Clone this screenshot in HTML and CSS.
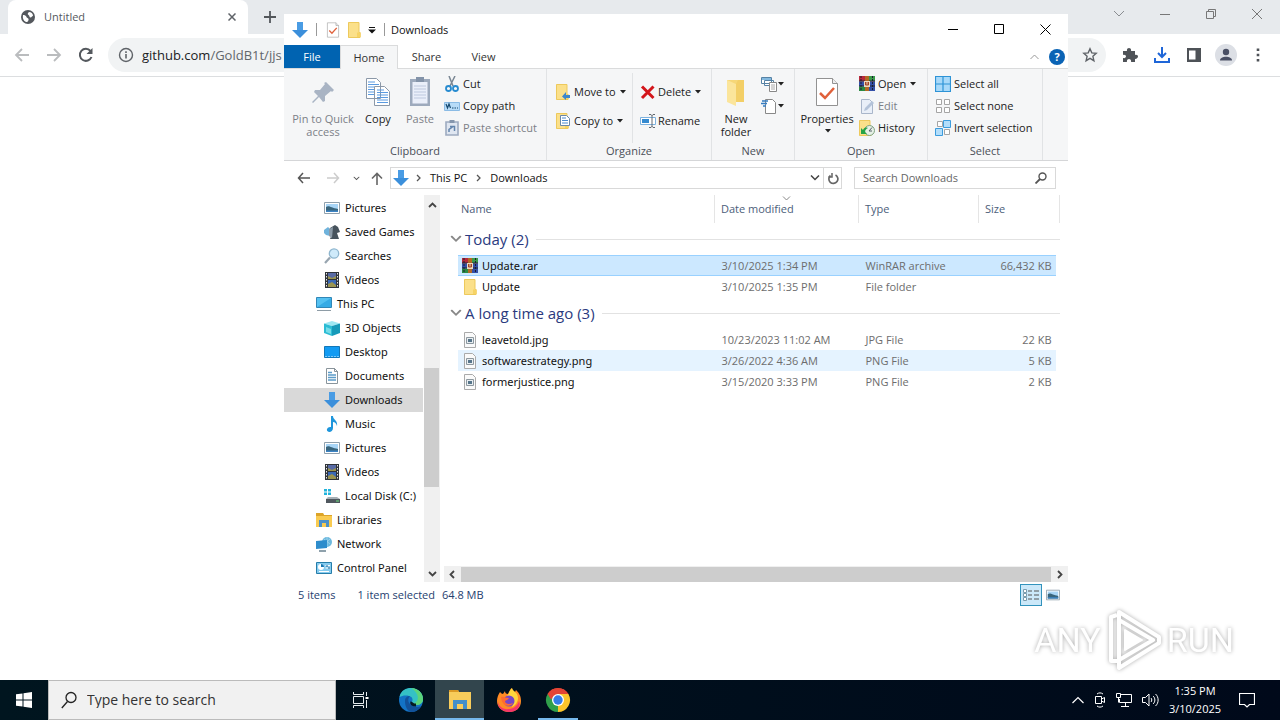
FILE: index.html
```html
<!DOCTYPE html>
<html lang="en">
<head>
<meta charset="utf-8">
<title>Desktop</title>
<link rel="stylesheet" href="styles.css">
</head>
<body>
<svg class="sprite" aria-hidden="true">
  <symbol id="i-down" viewBox="0 0 16 16"><path d="M5 0h6v8h5l-8 8-8-8h5z" fill="#3b8fdb"/><path d="M5 0h6v8h-6z" fill="#4a9ce4"/></symbol>
  <symbol id="i-folder" viewBox="0 0 16 16"><path d="M2 .5h11v10h1.500v5H2z" fill="#fbe08a"/><path d="M2.500 .5h10.500v10h1v5H2.500z" fill="none" stroke="#edc95c"/><path d="M11 15v-4.500h3.500V15z" fill="#f6d365"/></symbol>
  <symbol id="i-rar" viewBox="0 0 16 16"><path d="M0 0h16v5.500H0z" fill="#b62a3c"/><path d="M0 5.500h16v5H0z" fill="#3450a8"/><path d="M0 10.500h16V15H0z" fill="#2c8a44"/><path d="M9 0h7v5H9z" fill="#3a9a4a"/><path d="M10 10h6v5h-6z" fill="#3450a8"/><path d="M0 5h16M0 10h16" stroke="#25283b"/><path d="M2 0v15M13.500 0v15" stroke="#181c30" stroke-dasharray="2 1"/><path d="M6 0h4v15H6z" fill="#b36a24"/><path d="M5 5h6v6H5z" fill="#e9d9c2"/><path d="M6.500 6v3h3V6M8 6v3" fill="none" stroke="#a54324"/></symbol>
  <symbol id="i-pic" viewBox="0 0 16 16"><path d="M.5 2.500h15v11H.5z" fill="#fff" stroke="#8fa0ad"/><path d="M2 4h12v8H2z" fill="#a8d5f6"/><path d="M2 7c3-2 5 1 12 2v3H2z" fill="#39657c"/><path d="M2 10.500h12V12H2z" fill="#3c84c5"/></symbol>
  <symbol id="i-games" viewBox="0 0 16 16"><path d="M0 6l4-3 2 2v7l-4-1-2-2z" fill="#6fb3dc"/><path d="M6 4l5-3 3 2 2 5-3 1 2 6H6l2-5-3-1z" fill="#47535d"/><path d="M5 5l4-2-1 11-3-2z" fill="#8c9ba8"/></symbol>
  <symbol id="i-search" viewBox="0 0 16 16"><path d="M6 9.500L1 15" stroke="#98a5b0" stroke-width="2.200"/><circle cx="10" cy="5.500" r="4.700" fill="#cfeafa" stroke="#8fb6cf" stroke-width="1.300"/></symbol>
  <symbol id="i-video" viewBox="0 0 16 16"><path d="M1 0h14v16H1z" fill="#30343a"/><path d="M4 1h8v6H4z" fill="#596ba5"/><path d="M4 8h8v7H4z" fill="#3a68b5"/><path d="M4 4l4 2 4-2v3H4zM4 12l4-2 4 3v2H4z" fill="#9a9450"/><path d="M2.500 1v15M13.500 1v15" stroke="#e8e8e8" stroke-dasharray="1.500 1.500"/></symbol>
  <symbol id="i-pc" viewBox="0 0 16 16"><path d="M.5 1.500h15v10H.5z" fill="#55c1f1" stroke="#3187b7"/><path d="M1 11L15 2v9z" fill="#37abe5"/><path d="M1 14.500h14" stroke="#8e9ca6"/></symbol>
  <symbol id="i-3d" viewBox="0 0 16 16"><path d="M0 3.500L8 1l8 2.500L8 6z" fill="#9ee8f3"/><path d="M0 3.500L8 6v10l-8-3z" fill="#2cbcd4"/><path d="M16 3.500L8 6v10l8-3z" fill="#169ab9"/><path d="M2 7l5 2v5l-5-2z" fill="#75dce8"/></symbol>
  <symbol id="i-desk" viewBox="0 0 16 16"><path d="M.5 2.500h15v11H.5z" fill="#129bf3" stroke="#1277b8"/><path d="M1 12.500h14" stroke="#7cc9fa" stroke-dasharray="2 1"/></symbol>
  <symbol id="i-doc" viewBox="0 0 16 16"><path d="M2.500 .5h8l3 3v12h-11z" fill="#fff" stroke="#89949b"/><path d="M4 4.500h4M4 7h8M4 9.500h8M4 12h8" stroke="#5b9bc8" stroke-width="1.300"/><path d="M10.500 0v3.500H14" fill="none" stroke="#89949b"/></symbol>
  <symbol id="i-music" viewBox="0 0 16 16"><path d="M7 0h2c0 4 5 4 4 10-1-3-2-4-4-4v6c0 5-7 5-6 1 1-2 3-2 4-2z" fill="#1e96dc"/></symbol>
  <symbol id="i-disk" viewBox="0 0 16 16"><path d="M0 1h3v2.500H0zM4 1h3v2.500H4zM0 4.500h3V7H0zM4 4.500h3V7H4z" fill="#21b4dc"/><path d="M4 9h9l3 2v1H2v-1z" fill="#a7b0b6"/><path d="M2 11h14v4H2z" fill="#50585e"/><path d="M12 13h3" stroke="#6be07e"/></symbol>
  <symbol id="i-lib" viewBox="0 0 16 16"><path d="M0 1h7l1 2h8v12H0z" fill="#f9cb51"/><path d="M0 1h7l1 2h8v1H0z" fill="#dca429"/><path d="M3 8h10v7h-3v-4H6v4H3z" fill="#4c91c9"/></symbol>
  <symbol id="i-net" viewBox="0 0 16 16"><circle cx="11" cy="6" r="5" fill="#6db9de"/><path d="M8 3l6 5M14 3L8 8M11 1v9" stroke="#b9e2f5" stroke-width=".6"/><path d="M0 5l11-1v8L0 13z" fill="#2e8dcc"/><path d="M3 15h7" stroke="#6a8290" stroke-width="1.500"/></symbol>
  <symbol id="i-cpl" viewBox="0 0 16 16"><path d="M.5 2.500h15v11H.5z" fill="#85cbef" stroke="#267da9"/><circle cx="5" cy="7" r="3" fill="#fff"/><path d="M5 7V4a3 3 0 0 1 3 3z" fill="#1978b3"/><path d="M9.500 5.500H14M9.500 8H14M3 11.500h10" stroke="#fff"/><path d="M11 5v2M13 7v2" stroke="#205f8d"/></symbol>
  <symbol id="i-file" viewBox="0 0 16 16"><path d="M2.500 .5h8l3 3v12h-11z" fill="#fafafa" stroke="#aaa"/><path d="M4.500 5.500h7v6h-7z" fill="#e9eef1" stroke="#8d989f"/><path d="M6 7h4v3H6z" fill="#57758a"/></symbol>
  <symbol id="i-drop" viewBox="0 0 6 4"><path d="M0 0h6L3 3.500z" fill="#222"/></symbol>
  <symbol id="i-check" viewBox="0 0 24 30"><path d="M1.500 1.500h16l5 5v22h-21z" fill="#fff" stroke="#929292"/><path d="M17.500 1.500v5h5" fill="#eee" stroke="#929292"/><path d="M5 16l5 5 9-10" fill="none" stroke="#e0613b" stroke-width="2.500"/></symbol>
  <symbol id="i-cd" viewBox="0 0 10 6"><path d="M1 .5l4 4 4-4" fill="none" stroke="currentColor" stroke-width="1.500"/></symbol>
</svg>

<main class="desktop">
  <section class="browser" aria-label="Browser">
    <div class="tabstrip">
      <div class="tab">
        <svg width="14" height="14" viewBox="0 0 14 14"><circle cx="7" cy="7" r="7" fill="#54585d"/><path d="M2 5c1.500 0 3 .5 3.500 2s2.500 1 2 3-1.500 2-2.500 2C2 10.500 1.500 8 2 5zM8 2c2 0 4 1.500 4 4-1.500 0-1 1.500-2.500 1.500S9 6 7.500 5 7 3 8 2z" fill="#fff"/></svg>
        <span class="tab-title">Untitled</span>
        <button class="bare" aria-label="Close tab"><svg width="8" height="8" viewBox="0 0 8 8"><path d="M.5.5l7 7m0-7l-7 7" stroke="#5f6368" stroke-width="1.500"/></svg></button>
      </div>
      <button class="bare newtab" aria-label="New tab"><svg width="12" height="12" viewBox="0 0 12 12"><path d="M6 0v12M0 6h12" stroke="#53575b" stroke-width="1.800"/></svg></button>
      <div class="browser-ctl">
        <button class="bare" aria-label="Search tabs"><svg width="12" height="12" viewBox="0 0 12 12"><path d="M1 3l5 5 5-5" fill="none" stroke="#8a8d91"/></svg></button>
        <button class="bare" aria-label="Minimize"><svg width="12" height="12" viewBox="0 0 12 12"><path d="M1 6.500h10" stroke="#777"/></svg></button>
        <button class="bare" aria-label="Restore"><svg width="12" height="12" viewBox="0 0 12 12"><path d="M1.500 3.500h7v7h-7zM3.500 3.500v-2h7v7h-2" fill="none" stroke="#777"/></svg></button>
        <button class="bare" aria-label="Close"><svg width="12" height="12" viewBox="0 0 12 12"><path d="M1 1l10 10M11 1L1 11" stroke="#777"/></svg></button>
      </div>
    </div>
    <div class="toolbar">
      <button class="bare" aria-label="Back"><svg width="16" height="16" viewBox="0 0 16 16"><path d="M15 8H2M8 2L2 8l6 6" fill="none" stroke="#babcbe" stroke-width="1.800"/></svg></button>
      <button class="bare" aria-label="Forward"><svg width="16" height="16" viewBox="0 0 16 16"><path d="M1 8h13M8 2l6 6-6 6" fill="none" stroke="#babcbe" stroke-width="1.800"/></svg></button>
      <button class="bare" aria-label="Reload"><svg width="16" height="16" viewBox="0 0 16 16"><path d="M13.500 10A6 6 0 1 1 12.500 4" fill="none" stroke="#54585d" stroke-width="2"/><path d="M14.500 1v6h-6z" fill="#54585d"/></svg></button>
      <div class="omnibox">
        <svg width="16" height="16" viewBox="0 0 16 16"><circle cx="8" cy="8" r="6.500" fill="none" stroke="#5f6368" stroke-width="1.400"/><path d="M8 7v4.500M8 4.300v1.600" stroke="#5f6368" stroke-width="1.600"/></svg>
        <span class="url">github.com<span class="path">/GoldB1t/jjs</span></span>
        <button class="bare star" aria-label="Bookmark"><svg width="16" height="16" viewBox="0 0 16 16"><path d="M8 1.800l1.800 4.100 4.400.4-3.300 3 1 4.400L8 11.400l-3.900 2.300 1-4.400-3.300-3 4.400-.4z" fill="none" stroke="#5f6368" stroke-width="1.400"/></svg></button>
      </div>
      <div class="tools">
        <button class="bare" aria-label="Extensions"><svg width="16" height="16" viewBox="0 0 16 16"><path d="M1 4h4c-1-4 5-4 4 0h4v4c4-1 4 4 0 4v3H9c1-4-5-4-4 0H1v-4c4 1 4-4 0-3z" fill="#4e5257"/></svg></button>
        <button class="bare" aria-label="Downloads"><svg width="16" height="16" viewBox="0 0 16 16"><path d="M8 0v10M4 6l4 4 4-4M1 11v4h14v-4" fill="none" stroke="#1f66d8" stroke-width="2"/></svg></button>
        <button class="bare" aria-label="Side panel"><svg width="16" height="16" viewBox="0 0 16 16"><path d="M1 1h14v14H1z" fill="#4e5257"/><path d="M3 3.500h6.500v9H3z" fill="#fff"/></svg></button>
        <button class="bare avatar" aria-label="Profile"><svg width="22" height="22" viewBox="0 0 22 22"><circle cx="11" cy="11" r="11" fill="#dcdfe5"/><circle cx="11" cy="8" r="3.200" fill="#4a5065"/><path d="M5 16.500c0-5 12-5 12 0z" fill="#4a5065"/></svg></button>
        <button class="bare" aria-label="Menu"><svg width="16" height="16" viewBox="0 0 16 16"><path d="M6.700 1.500h2.600v2.600H6.700zM6.700 6.700h2.600v2.600H6.700zM6.700 12h2.600v2.600H6.700z" fill="#4e5257"/></svg></button>
      </div>
    </div>
  </section>

  <section class="explorer" aria-label="Downloads">
    <header class="titlebar">
      <svg width="16" height="16"><use href="#i-down"/></svg>
      <i class="tick"></i>
      <button class="bare" aria-label="Properties"><svg width="14" height="16"><use href="#i-check"/></svg></button>
      <button class="bare" aria-label="New folder"><svg width="16" height="16"><use href="#i-folder"/></svg></button>
      <button class="bare" aria-label="Customize"><svg width="8" height="8" viewBox="0 0 8 8"><path d="M1 1.500h6" stroke="#111"/><path d="M0 3.500h8L4 7.500z" fill="#111"/></svg></button>
      <i class="tick"></i>
      <span class="win-title">Downloads</span>
      <div class="win-ctl">
        <button class="bare" aria-label="Minimize"><svg width="11" height="11" viewBox="0 0 11 11"><path d="M0 5.500h10" stroke="#000"/></svg></button>
        <button class="bare" aria-label="Maximize"><svg width="11" height="11" viewBox="0 0 11 11"><path d="M.5.500h9v9h-9z" fill="none" stroke="#000"/></svg></button>
        <button class="bare" aria-label="Close"><svg width="11" height="11" viewBox="0 0 11 11"><path d="M.5.500l10 10m0-10l-10 10" stroke="#000"/></svg></button>
      </div>
    </header>
    <nav class="tabs">
      <button class="file">File</button><button class="current">Home</button><button>Share</button><button>View</button>
      <div class="help">
        <button class="bare" aria-label="Collapse ribbon"><svg width="9" height="6" viewBox="0 0 9 6"><path d="M.5 5l4-4 4 4" fill="none" stroke="#999"/></svg></button>
        <button class="bare" aria-label="Help"><span class="qmark">?</span></button>
      </div>
    </nav>
    <div class="ribbon">
      <section class="group g-clip">
        <div class="body">
          <button class="big pin off"><svg width="32" height="32" viewBox="0 0 32 32"><path d="M19 6l8 8-2 2-1-1-6 5v5l-2 1-4-5-6 6-1-1 6-6-4-4 1-2h5l5-6-1-1z" fill="#a9b4c4"/></svg>Pin to Quick access</button>
          <button class="big copy"><svg width="26" height="32" viewBox="0 0 26 32"><path d="M1.500 2.500h10l4 4v16h-14zM9.500 10.500h10l5 5v14h-15z" fill="#fff" stroke="#8b98a8"/><path d="M3 6h7M3 8.500h11M3 11h6M3 13.500h6M3 16h6M3 18.500h6M12 14h7M12 16.500h11M12 19h11M12 21.500h11M12 24h11M12 26.500h11" stroke="#5a9ae0"/></svg>Copy</button>
          <button class="big paste off"><svg width="22" height="32" viewBox="0 0 22 32"><path d="M1 3h20v27H1z" fill="#9daabd"/><path d="M3.500 6h15v21.500h-15z" fill="#eaeffa"/><path d="M7 1h8v5H7z" fill="#8393a9"/><path d="M5 10h12M5 13h12M5 16h12M5 19h12M5 22h12" stroke="#bdc8de"/></svg>Paste</button>
          <div class="stack">
            <button><svg width="16" height="16" viewBox="0 0 16 16"><path d="M5 0l4 10M11 0L6 10" stroke="#7a8794" stroke-width="1.500"/><circle cx="4.500" cy="12.500" r="2.500" fill="none" stroke="#278bd0" stroke-width="1.800"/><circle cx="11.500" cy="12.500" r="2.500" fill="none" stroke="#278bd0" stroke-width="1.800"/></svg>Cut</button>
            <button><svg width="16" height="16" viewBox="0 0 16 16"><path d="M.5 4.500h15v8H.5z" fill="#b8dcf8" stroke="#8abbe5"/><path d="M2 6l1.500 4L5 6l1.500 4M8 10h1.500M10.500 10H12M13 10h1" fill="none" stroke="#154970" stroke-width="1.200"/></svg>Copy path</button>
            <button class="off"><svg width="16" height="16" viewBox="0 0 16 16"><path d="M2 2h12v13H2z" fill="#dfe6f1" stroke="#9dabc0" stroke-width="1.600"/><path d="M5.500 0h5v3h-5z" fill="#8596ad"/><path d="M5 12V9.500L8.500 7M6 6.500h4.500V11" fill="none" stroke="#6284ac" stroke-width="1.500"/></svg>Paste shortcut</button>
          </div>
        </div>
        <h2>Clipboard</h2>
      </section>
      <section class="group g-org">
        <div class="body">
          <div class="stack two">
            <button><svg width="16" height="16" viewBox="0 0 16 16"><use href="#i-folder" x="-2"/><path d="M14 14v-3h-4V8l-4 4.500 4 3.500v-2z" fill="#3d87cc"/></svg>Move to<svg class="dd"><use href="#i-drop"/></svg></button>
            <button><svg width="16" height="16" viewBox="0 0 16 16"><use href="#i-folder" x="-2"/><path d="M4.500 2.500h6l3 3v7h-9z" fill="#fff" stroke="#6b88a8"/><path d="M6 5h4M6 7.500h6M6 10h6" stroke="#4b8bce"/></svg>Copy to<svg class="dd"><use href="#i-drop"/></svg></button>
          </div>
          <div class="stack two ruled">
            <button><svg width="16" height="16" viewBox="0 0 16 16"><path d="M2 2.500l11.500 11.500M13.500 2.500L2 14" stroke="#d3161b" stroke-width="3"/></svg>Delete<svg class="dd"><use href="#i-drop"/></svg></button>
            <button><svg width="16" height="16" viewBox="0 0 16 16"><path d="M.5 4.500h15v7H.5z" fill="#fff" stroke="#7db2df"/><path d="M2 6h7v4H2z" fill="#348ad0"/><path d="M9 1.500h2l1 1 1-1h2M9 14.500h2l1-1 1 1h2M12 2v12" fill="none" stroke="#626970"/></svg>Rename</button>
          </div>
        </div>
        <h2>Organize</h2>
      </section>
      <section class="group g-new">
        <div class="body">
          <button class="big newf"><svg width="24" height="32" viewBox="0 0 24 32"><path d="M3 4h17v22H3z" fill="#f6d777"/><path d="M3 4l9 4v22l-9-4z" fill="#fbe59b"/><path d="M12 8l2-4h6v22h-8z" fill="#f3cf67"/></svg>New folder</button>
          <div class="stack icons">
            <button aria-label="New item"><svg width="16" height="16" viewBox="0 0 16 16"><path d="M.5 1.500h10v6H.5zM3.500 4.500h9v5h-9z" fill="#fff" stroke="#5682a5"/><path d="M1 2h9v2H1z" fill="#83b9df"/><path d="M8.500 6.500h7v9h-7z" fill="#fff" stroke="#888"/><path d="M10 9h4M10 11h4M10 13h4" stroke="#aaa"/></svg><svg class="dd"><use href="#i-drop"/></svg></button>
            <button aria-label="Easy access"><svg width="16" height="16" viewBox="0 0 16 16"><path d="M4.500 1.500h7l3 3v11h-10z" fill="#fff" stroke="#888"/><path d="M1 3h6M0 5.500h6M2 8h3" stroke="#347cc1" stroke-width="1.400"/></svg><svg class="dd"><use href="#i-drop"/></svg></button>
          </div>
        </div>
        <h2>New</h2>
      </section>
      <section class="group g-open">
        <div class="body">
          <button class="big props"><svg width="24" height="32" viewBox="0 0 24 30"><use href="#i-check"/></svg>Properties<svg class="dd"><use href="#i-drop"/></svg></button>
          <div class="stack">
            <button><svg width="16" height="16"><use href="#i-rar"/></svg>Open<svg class="dd"><use href="#i-drop"/></svg></button>
            <button class="off"><svg width="16" height="16" viewBox="0 0 16 16"><path d="M2.500 1.500h8l3 3v11h-11z" fill="#e9eff8" stroke="#a9b6ca"/><path d="M5 13l1-3 7-7 2 2-7 7z" fill="#b4c3d9"/></svg>Edit</button>
            <button><svg width="16" height="16" viewBox="0 0 16 16"><use href="#i-folder" x="-2"/><circle cx="10.500" cy="10.500" r="5" fill="#e6f0e6" stroke="#7fa380"/><path d="M10 11l3-3.500M10 11h3" fill="none" stroke="#55606a"/><path d="M2 8v6h6l-2-2c0-2 1-3 3-4-3-1-4 0-5 2z" fill="#27a447"/></svg>History</button>
          </div>
        </div>
        <h2>Open</h2>
      </section>
      <section class="group g-sel">
        <div class="body">
          <div class="stack">
            <button><svg width="16" height="16" viewBox="0 0 16 16"><path d="M.5.500h15v15H.5zM8 0v16M0 8h16" fill="#a8d9f9" stroke="#2d93d6" stroke-width="1.200"/></svg>Select all</button>
            <button><svg width="16" height="16" viewBox="0 0 16 16"><path d="M1.500 1.500h5v5h-5zM9.500 1.500h5v5h-5zM1.500 9.500h5v5h-5zM9.500 9.500h5v5h-5z" fill="#fff" stroke="#a5a5a5"/></svg>Select none</button>
            <button><svg width="16" height="16" viewBox="0 0 16 16"><path d="M2.500 1.500h5v5h-5zM9.500 9.500h5v5h-5z" fill="#fff" stroke="#a5a5a5"/><path d="M8.500.5h7v7h-7zM.5 8.500h7v7h-7z" fill="#b3defb" stroke="#3c9cdd"/></svg>Invert selection</button>
          </div>
        </div>
        <h2>Select</h2>
      </section>
    </div>

    <div class="addressrow">
      <button class="bare" aria-label="Back"><svg width="13" height="12" viewBox="0 0 13 12"><path d="M13 6H2M6 1L1.500 6 6 11" fill="none" stroke="#555" stroke-width="1.500"/></svg></button>
      <button class="bare" aria-label="Forward"><svg width="13" height="12" viewBox="0 0 13 12"><path d="M0 6h11M7 1l4.500 5L7 11" fill="none" stroke="#ccc" stroke-width="1.500"/></svg></button>
      <button class="bare recent" aria-label="Recent"><svg width="7" height="5" viewBox="0 0 10 6"><use href="#i-cd"/></svg></button>
      <button class="bare up" aria-label="Up"><svg width="12" height="13" viewBox="0 0 12 13"><path d="M6 13V2M1 6.500L6 1.500l5 5" fill="none" stroke="#666" stroke-width="1.600"/></svg></button>
      <div class="crumbs">
        <svg width="16" height="16"><use href="#i-down"/></svg>
        <svg width="5" height="8" viewBox="0 0 5 8"><path d="M1 1l3 3-3 3" fill="none" stroke="#555" stroke-width="1.300"/></svg>
        <a href="#pc">This PC</a>
        <svg width="5" height="8" viewBox="0 0 5 8"><path d="M1 1l3 3-3 3" fill="none" stroke="#555" stroke-width="1.300"/></svg>
        <a href="#downloads">Downloads</a>
        <button class="bare prev" aria-label="Previous locations"><svg width="10" height="6"><use href="#i-cd"/></svg></button>
        <button class="bare refresh" aria-label="Refresh"><svg width="12" height="13" viewBox="0 0 12 13"><path d="M3.500 3.500A4.500 4.500 0 1 0 8.500 3" fill="none" stroke="#666" stroke-width="1.700"/><path d="M5 1v4H1.500" fill="none" stroke="#666" stroke-width="1.500"/></svg></button>
      </div>
      <label class="searchbox"><input type="search" placeholder="Search Downloads" aria-label="Search Downloads"><svg width="12" height="12" viewBox="0 0 12 12"><circle cx="7.500" cy="4.500" r="3.500" fill="none" stroke="#555" stroke-width="1.400"/><path d="M5 7l-4.500 4.500" stroke="#555" stroke-width="1.800"/></svg></label>
    </div>

    <div class="panes">
      <ul class="tree">
        <li><svg><use href="#i-pic"/></svg>Pictures</li>
        <li><svg><use href="#i-games"/></svg>Saved Games</li>
        <li><svg><use href="#i-search"/></svg>Searches</li>
        <li><svg><use href="#i-video"/></svg>Videos</li>
        <li class="top"><svg><use href="#i-pc"/></svg>This PC</li>
        <li><svg><use href="#i-3d"/></svg>3D Objects</li>
        <li><svg><use href="#i-desk"/></svg>Desktop</li>
        <li><svg><use href="#i-doc"/></svg>Documents</li>
        <li class="chosen"><svg><use href="#i-down"/></svg>Downloads</li>
        <li><svg><use href="#i-music"/></svg>Music</li>
        <li><svg><use href="#i-pic"/></svg>Pictures</li>
        <li><svg><use href="#i-video"/></svg>Videos</li>
        <li><svg><use href="#i-disk"/></svg>Local Disk (C:)</li>
        <li class="top"><svg><use href="#i-lib"/></svg>Libraries</li>
        <li class="top"><svg><use href="#i-net"/></svg>Network</li>
        <li class="top"><svg><use href="#i-cpl"/></svg>Control Panel</li>
      </ul>
      <div class="vscroll">
        <svg width="9" height="6" viewBox="0 0 9 6"><path d="M1 5l3.500-3.500L8 5" fill="none" stroke="#444" stroke-width="1.800"/></svg>
        <div class="vtrack"><div class="vthumb"></div></div>
        <svg width="9" height="6" viewBox="0 0 9 6"><path d="M1 1l3.500 3.500L8 1" fill="none" stroke="#444" stroke-width="1.800"/></svg>
      </div>
      <div class="files">
        <table>
          <colgroup><col class="c-gut"><col><col class="c-date"><col class="c-type"><col class="c-size"><col class="c-tail"></colgroup>
          <thead><tr><th></th><th>Name</th><th class="sorted">Date modified<svg width="9" height="5" viewBox="0 0 9 5"><path d="M1 .5l3.500 3.500L8 .5" fill="none" stroke="#888"/></svg></th><th>Type</th><th>Size</th><th class="end"></th></tr></thead>
          <tbody>
            <tr class="sect"><th colspan="6"><div><svg width="12" height="8" viewBox="0 0 10 6"><use href="#i-cd"/></svg>Today (2)<i></i></div></th></tr>
            <tr class="selected"><td></td><td><span><svg><use href="#i-rar"/></svg>Update.rar</span></td><td>3/10/2025 1:34 PM</td><td>WinRAR archive</td><td>66,432 KB</td><td></td></tr>
            <tr><td></td><td><span><svg><use href="#i-folder"/></svg>Update</span></td><td>3/10/2025 1:35 PM</td><td>File folder</td><td></td><td></td></tr>
            <tr class="sect"><th colspan="6"><div><svg width="12" height="8" viewBox="0 0 10 6"><use href="#i-cd"/></svg>A long time ago (3)<i></i></div></th></tr>
            <tr><td></td><td><span><svg><use href="#i-file"/></svg>leavetold.jpg</span></td><td>10/23/2023 11:02 AM</td><td>JPG File</td><td>22 KB</td><td></td></tr>
            <tr class="hover"><td></td><td><span><svg><use href="#i-file"/></svg>softwarestrategy.png</span></td><td>3/26/2022 4:36 AM</td><td>PNG File</td><td>5 KB</td><td></td></tr>
            <tr><td></td><td><span><svg><use href="#i-file"/></svg>formerjustice.png</span></td><td>3/15/2020 3:33 PM</td><td>PNG File</td><td>2 KB</td><td></td></tr>
          </tbody>
        </table>
        <div class="hscroll">
          <svg width="6" height="9" viewBox="0 0 6 9"><path d="M5 1L1.500 4.500 5 8" fill="none" stroke="#444" stroke-width="1.800"/></svg>
          <div class="hthumb"></div>
          <svg width="6" height="9" viewBox="0 0 6 9"><path d="M1 1l3.500 3.500L1 8" fill="none" stroke="#444" stroke-width="1.800"/></svg>
        </div>
      </div>
    </div>
    <footer class="status">
      <span>5 items</span><span class="sel">1 item selected</span><span class="size">64.8 MB</span>
      <div class="views">
        <button class="bare on" aria-label="Details"><svg width="16" height="14" viewBox="0 0 16 14"><path d="M.5 1.500h3v3h-3zM.5 5.500h3v3h-3zM.5 9.500h3v3h-3z" fill="#fff" stroke="#7b9caf"/><path d="M5 3h4M11 3h5M5 7h4M11 7h5M5 11h4M11 11h5" stroke="#555"/></svg></button>
        <button class="bare" aria-label="Large icons"><svg width="14" height="14"><use href="#i-pic"/></svg></button>
      </div>
    </footer>
  </section>

  <div class="watermark">
    <span>ANY</span>
    <svg width="58" height="64" viewBox="0 0 58 64"><g fill="none" stroke="#fff" stroke-width="4" stroke-linejoin="round"><path d="M12 7L6 9v44h6M14 52V4l40 25v6L14 60v-8l34-20-34-20"/><path d="M20 22l17 10-17 10z" fill="#fff" stroke-width="2"/></g></svg>
    <span>RUN</span>
  </div>
</main>

<footer class="taskbar">
  <button class="bare start" aria-label="Start"><svg width="16" height="16" viewBox="0 0 16 16"><path d="M0 2.300L6.500 1.400v6.100H0zM7.500 1.200L16 0v7.500H7.500zM0 8.500h6.500v6.100L0 13.700zM7.500 8.500H16V16l-8.500-1.200z" fill="#fff"/></svg></button>
  <label class="tasksearch"><svg width="16" height="18" viewBox="0 0 16 18"><circle cx="10" cy="6.500" r="5" fill="none" stroke="#222" stroke-width="1.300"/><path d="M6.500 10.500L.8 17" stroke="#222" stroke-width="1.300"/></svg><input type="text" placeholder="Type here to search" aria-label="Type here to search"></label>
  <button class="bare app" aria-label="Task view"><svg width="16" height="16" viewBox="0 0 16 16"><path d="M.5 0v2.500h10V0M.5 16v-2.500h10V16M.5 4.500h10v7H.5zM13.500 0v4M13.500 8v8" fill="none" stroke="#e8eef0"/><path d="M12.500 5h3v2h-3z" fill="#fff"/></svg></button>
  <button class="bare app wide" aria-label="Edge"><svg width="26" height="26" viewBox="0 0 26 26"><circle cx="13" cy="13" r="12" fill="#1373c5"/><path d="M1.500 10C3 3 8 1 13 1c7 0 12 5 12 11 0 4-3 6-7 6-3 0-5-1-4-3 1-2 1-5-3-6-4-1-7 0-9.500 1z" fill="#35c1c5"/><path d="M13 1c7 0 12 5 12 11 0 4-3 6-7 6-2 0-4-1-4-2 7 1 9-9-1-15z" fill="#5cd47b"/><path d="M7 14c0-4 3-5 5-5-4 4-1 11 8 11 1 0 3-1 3-1-2 4-6 6-10 6-4-1-6-6-6-11z" fill="#12529a"/><path d="M14 15c-1 2 1 3 4 3" stroke="#051a24" stroke-width="3" fill="none"/></svg></button>
  <button class="bare app wide lit" aria-label="File Explorer"><svg width="24" height="24" viewBox="0 0 24 24"><path d="M1 3h9l1 2h12v17H1z" fill="#f8cc5b"/><path d="M1 3h9l1 2H1z" fill="#dc9a25"/><path d="M5 13h14v9h-4v-5H9v5H5z" fill="#438fc9"/></svg></button>
  <button class="bare app wide" aria-label="Firefox"><svg width="26" height="26" viewBox="0 0 26 26"><path d="M4 5c1 1 2 2 3 2l2-3c0 2 1 3 3 3 1-2 2-5 4-6 0 2 2 3 3 4l1-2c4 4 5 7 5 11 0 7-5 11-12 11S1 20 1 14c0-3 1-6 3-9z" fill="#ff8a24"/><path d="M16 1c0 3 6 4 6 10 0 4-3 8-6 9 3-6 0-10-5-11 2-2 2-5 5-8z" fill="#ffd63c"/><path d="M2 14c0 5 5 9 11 8 5 0 9-4 10-8 3 7-4 11-10 11S1 21 2 14z" fill="#f5356a"/><circle cx="13" cy="14" r="5.500" fill="#7746c7"/><path d="M5 10c3-1 4 1 8 1-1 2-3 2-4 3 0 3 4 4 8 2-2 4-11 5-12-6z" fill="#ff6b30"/></svg></button>
  <button class="bare app wide running" aria-label="Chrome"><svg width="26" height="26" viewBox="0 0 26 26"><path d="M13 13L2.600 7A12 12 0 0 1 23.400 7z" fill="#e34435"/><path d="M13 13L23.400 7A12 12 0 0 1 13 25z" fill="#fbc52c"/><path d="M13 13v12A12 12 0 0 1 2.600 7z" fill="#30a04b"/><path d="M13 7h10.500L18 16z" fill="#fbc52c"/><path d="M2.600 7l5.500 9.500L13 7z" fill="#30a04b"/><path d="M2.600 7C5 3 9 1 13 1s8 2 10.400 6H13l-4 2.500-3 3z" fill="#e34435"/><circle cx="13" cy="13" r="6" fill="#fff"/><circle cx="13" cy="13" r="4.700" fill="#347de8"/></svg></button>
  <div class="tray">
    <button class="bare" aria-label="Hidden icons"><svg width="12" height="8" viewBox="0 0 12 8"><path d="M.5 7L6 1.500 11.500 7" fill="none" stroke="#fff" stroke-width="1.200"/></svg></button>
    <button class="bare" aria-label="Meet now"><svg width="12" height="16" viewBox="0 0 12 16"><path d="M1.500 4.500h6v7h-6zM7.500 7l3-1.500v5l-3-1.500M3 2c2-1.500 4-1.500 6 0M3 14c2 1.500 4 1.500 6 0" fill="none" stroke="#fff"/></svg></button>
    <button class="bare" aria-label="Network"><svg width="16" height="14" viewBox="0 0 16 14"><path d="M5 1.500h10.500v8H3.500V6M.5.500h4v4h-4zM2.500 4.500v5M9.500 9.500v4M5 13.500h8" fill="none" stroke="#fff"/></svg></button>
    <button class="bare" aria-label="Volume"><svg width="17" height="14" viewBox="0 0 17 14"><path d="M.5 4.500h3L7 1v12L3.500 9.500h-3zM9 5c1 1 1 3 0 4M11 3c2.500 2 2.500 6 0 8M13.500 1c3.500 3 3.500 9 0 12" fill="none" stroke="#fff"/></svg></button>
    <time class="clock">1:35 PM<br>3/10/2025</time>
    <button class="bare note" aria-label="Notifications"><svg width="16" height="16" viewBox="0 0 16 16"><path d="M.5 1.500h15v11h-5L8 15l-2.500-2.500h-5z" fill="none" stroke="#fff" stroke-width="1.200"/></svg></button>
  </div>
</footer>
</body>
</html>
```

FILE: styles.css
```css
* { box-sizing: border-box; }
body {
  margin: 0;
  min-height: 100vh;
  display: flex;
  flex-direction: column;
  background: #fff;
  color: #111;
  font: 11px/16px "Open Sans", "Noto Sans", sans-serif;
}
button, input { font: inherit; color: inherit; }
.sprite { position: absolute; width: 0; height: 0; }
svg { flex: none; display: block; }
.bare {
  display: flex;
  align-items: center;
  justify-content: center;
  padding: 0;
  border: 0;
  background: none;
}
.desktop { position: relative; flex: 1; }

/* Browser */
.tabstrip { display: flex; height: 34px; background: #e7eaed; padding-left: 8px; }
.tab {
  display: flex;
  align-items: center;
  gap: 9px;
  width: 240px;
  padding: 0 12px 0 13px;
  background: #fff;
  border-radius: 8px 8px 0 0;
}
.tab-title { flex: 1; color: #55595e; }
.newtab { width: 44px; }
.browser-ctl { display: flex; margin-left: auto; padding-bottom: 6px; }
.browser-ctl .bare { width: 46px; }
.toolbar {
  display: flex;
  align-items: center;
  gap: 16px;
  height: 43px;
  padding: 0 14px;
  border-bottom: 1px solid #dcdee0;
}
.omnibox {
  display: flex;
  flex: 1;
  align-items: center;
  gap: 8px;
  height: 34px;
  margin-left: -2px;
  padding: 0 8px 0 10px;
  border-radius: 17px;
  background: #f1f3f4;
}
.url { font-size: 13px; line-height: 20px; color: #202124; }
.path { color: #62666b; }
.star { margin-left: auto; }
.tools { display: flex; gap: 16px; align-items: center; }
.avatar { margin: 0 -3px; }

/* Explorer window */
.explorer {
  position: absolute;
  top: 14px;
  left: 284px;
  right: 212px;
  background: #fff;
}
.titlebar { display: flex; align-items: center; height: 31px; padding-left: 8px; gap: 6px; }
.tick { width: 1px; height: 13px; background: #999; margin: 0 3px 0 2px; }
.win-title { margin-left: -3px; }
.win-ctl { display: flex; align-self: stretch; margin-left: auto; }
.win-ctl .bare { width: 46px; }
.tabs { display: flex; height: 24px; border-bottom: 1px solid #dadbdc; }
.tabs > button { width: 57px; padding: 0; border: 0; background: none; color: #333; }
.tabs > .file { width: 56px; background: #0063b1; color: #fff; }
.tabs > .current { width: 58px; height: 24px; background: #f5f6f7; border: 1px solid #dadbdc; border-bottom: 0; }
.help { display: flex; gap: 10px; align-items: center; margin-left: auto; padding-right: 3px; }
.qmark { width: 16px; height: 16px; border-radius: 8px; background: #0a63b5; color: #fff; font-weight: 700; }

.ribbon { display: flex; height: 92px; background: #f5f6f7; border-bottom: 1px solid #d5d6d8; }
.group {
  display: flex;
  flex-direction: column;
  padding: 4px 0 1px;
  border-right: 1px solid #e1e3e5;
}
.group h2 { margin: 0; font-size: 11px; font-weight: 400; line-height: 16px; text-align: center; color: #4a4f57; }
.body { display: flex; flex: 1; }
.group button { border: 0; padding: 0; background: none; color: #222; text-align: left; }
.group .off { color: #7c8087; }
.group .big {
  display: flex;
  flex-direction: column;
  align-items: center;
  justify-content: flex-start;
  padding-top: 3px;
  gap: 4px;
  text-align: center;
  line-height: 13px;
}
.g-clip { width: 263px; }
.g-org { width: 165px; }
.g-new { width: 83px; }
.g-open { width: 133px; }
.g-sel { width: 115px; }
.group .pin { width: 68px; margin-left: 5px; }
.group .copy { width: 42px; }
.group .paste { width: 42px; margin-right: 3px; }
.group .newf { width: 40px; margin-left: 4px; }
.group .props { width: 64px; }
.stack { display: flex; flex-direction: column; }
.stack button { display: flex; align-items: center; gap: 3px; height: 22px; white-space: nowrap; }
.dd { width: 6px; height: 4px; margin-left: 1px; }
.two { flex: none; width: 85px; padding: 4px 0 0 9px; }
.two button { height: 29px; gap: 2px; }
.two .dd { margin-left: 2px; }
.ruled { flex: 1; width: auto; padding-left: 7px; border-left: 1px solid #e1e3e5; }
.icons { padding-left: 5px; }
.icons button { gap: 0; }
.g-sel .stack { padding-left: 7px; }

.addressrow { display: flex; align-items: center; height: 34px; padding: 0 12px 0 13px; }
.addressrow > .bare { margin-right: 17px; }
.addressrow > .recent { margin: 0 11px 0 -4px; color: #555; }
.addressrow > .up { margin-right: 7px; }
.crumbs {
  display: flex;
  flex: 1;
  align-items: center;
  gap: 9px;
  height: 22px;
  padding-left: 2px;
  border: 1px solid #d9d9d9;
  color: #444;
}
.crumbs svg + svg { margin-left: -2px; }
.crumbs a { color: #111; text-decoration: none; }
.prev { margin-left: auto; margin-right: -6px; }
.refresh { width: 18px; height: 20px; border-left: 1px solid #d9d9d9; }
.searchbox {
  display: flex;
  align-items: center;
  width: 202px;
  height: 22px;
  margin-left: 12px;
  padding: 0 8px;
  border: 1px solid #d9d9d9;
}
.searchbox input { flex: 1; min-width: 0; padding: 0; border: 0; background: none; outline: 0; }
.searchbox input::placeholder { color: #666; }

.panes { display: flex; }
.tree { list-style: none; width: 139px; margin: 0; padding: 1px 0 2px; font-family: "Noto Sans", "Open Sans", sans-serif; }
.tree li {
  display: flex;
  align-items: center;
  gap: 5px;
  height: 24px;
  padding-left: 40px;
  white-space: nowrap;
}
.tree svg { width: 16px; height: 16px; }
.tree .top { padding-left: 32px; }
.tree .chosen { background: #d9d9d9; }
.vscroll {
  display: flex;
  flex-direction: column;
  align-items: center;
  width: 16px;
  margin-left: 1px;
  padding: 7px 0 5px;
  background: #f0f0f0;
}
.vtrack { display: flex; flex: 1; width: 100%; padding: 160px 1px 0 0; }
.vthumb { width: 100%; height: 119px; background: #cdcdcd; }
.files { display: flex; flex: 1; flex-direction: column; min-width: 0; padding-left: 4px; }
table { width: calc(100% - 8px); border-collapse: collapse; table-layout: fixed; color: #6d6d6d; }
.c-gut { width: 14px; }
.c-date { width: 144px; }
.c-type { width: 120px; }
.c-size { width: 77px; }
.c-tail { width: 4px; }
th, td { padding: 0; font-weight: 400; text-align: left; white-space: nowrap; }
thead th { position: relative; height: 28px; padding-left: 6px; border-left: 1px solid #e5e5e5; color: #4c607a; }
thead th:nth-child(-n+2) { border-left: 0; padding-left: 3px; }
thead .end { padding: 0; border: 0; border-right: 1px solid #e5e5e5; }
.sorted svg { position: absolute; top: 1px; left: 47%; }
td { height: 21px; padding-left: 7px; }
td:nth-child(2) { color: #111; padding-left: 4px; font-family: "Noto Sans", "Open Sans", sans-serif; }
td:nth-child(5) { text-align: right; padding: 0 4px 0 0; }
td:first-child, td:last-child { padding: 0; }
td span { display: flex; align-items: center; gap: 4px; }
td svg { width: 16px; height: 16px; }
.sect th { height: 32px; }
.sect div { display: flex; align-items: center; gap: 3px; padding-left: 6px; font-size: 15px; line-height: 20px; color: #2b3a7e; }
.sect svg { color: #888; }
.sect i { flex: 1; height: 1px; margin-left: 4px; background: #e2e2e2; }
.selected td:not(:first-child):not(:last-child) { background: #cce8ff; box-shadow: inset 0 1px #99d1ff, inset 0 -1px #99d1ff; }
.hover td:not(:first-child):not(:last-child) { background: #e5f3ff; }
.hscroll { display: flex; align-items: center; gap: 6px; height: 16px; margin-top: auto; padding: 0 5px; background: #f0f0f0; }
.hthumb { flex: 1; height: 15px; background: #cdcdcd; }
.status { display: flex; align-items: center; height: 25px; padding-left: 14px; color: #26416f; }
.sel { margin-left: 22px; }
.size { margin-left: 7px; }
.views { display: flex; margin-left: auto; padding-right: 4px; }
.views .bare { width: 22px; height: 22px; }
.views .on { background: #cbe8f9; border: 1px solid #3293bd; }

.watermark {
  position: absolute;
  right: 46px;
  bottom: 8px;
  display: flex;
  align-items: center;
  gap: 4px;
  font: 34px/64px "Liberation Sans Narrow", "Roboto", sans-serif;
  color: #fff;
  filter: drop-shadow(0 0 2px #aaa);
}

/* Taskbar */
.taskbar { display: flex; height: 40px; background: linear-gradient(90deg, #00151f, #00091a); color: #fff; }
.start { width: 48px; }
.tasksearch {
  display: flex;
  align-items: center;
  gap: 10px;
  width: 288px;
  padding-left: 12px;
  background: #f1f1f1;
  border: 1px solid #bbb;
}
.tasksearch input { flex: 1; min-width: 0; border: 0; padding: 0; background: none; outline: 0; font-size: 14px; }
.tasksearch input::placeholder { color: #333; }
.app { width: 50px; }
.wide { width: 49px; }
.lit { background: #32454d; border-bottom: 2px solid #76b9ed; }
.running { background: linear-gradient(#76b9ed, #76b9ed) center bottom / 40px 2px no-repeat; }
.tray { display: flex; align-items: center; gap: 10px; margin-left: auto; padding-right: 25px; }
.clock { width: 56px; margin-left: -2px; line-height: 18px; text-align: center; }
.note { margin-left: 6px; }
```
